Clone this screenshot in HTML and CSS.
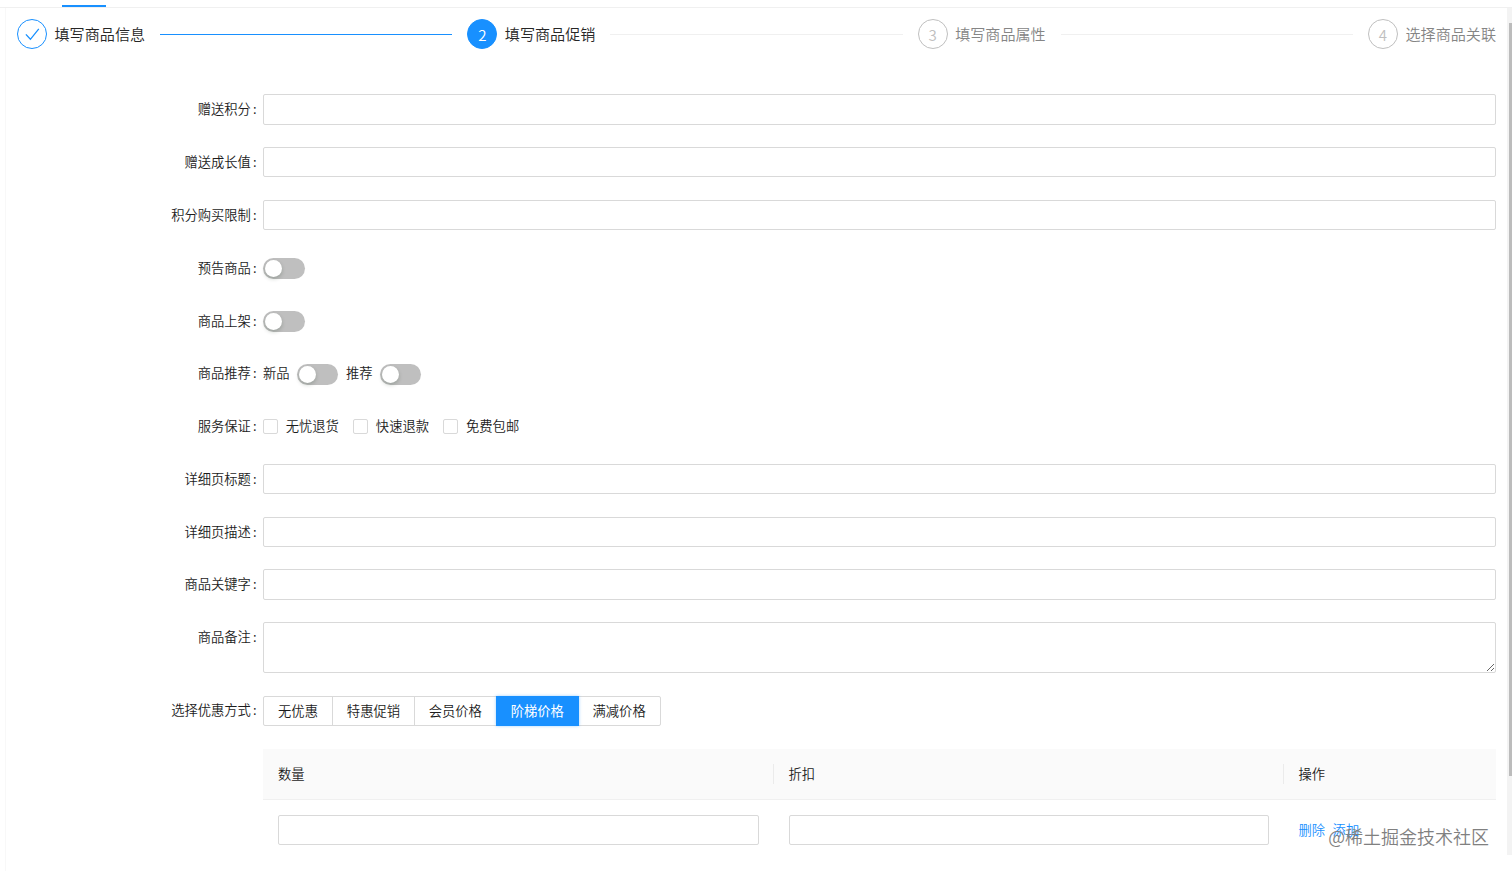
FILE: index.html
```html
<!DOCTYPE html>
<html lang="zh-CN">

<head>
	<meta charset="utf-8">
	<title>填写商品促销</title>
	<link rel="stylesheet" href="styles.css">
</head>

<body>
	<div class="tabs">
		<div class="ink-bar"></div>
	</div>
	<div class="wrap">
		<div class="panel">
			<div class="steps">
				<div class="step finish">
					<span class="step-icon">
						<svg width="15" height="15" viewBox="0 0 15 15"><path d="M0.9 7.4 L5.4 12.3 L13.8 1.9" fill="none" stroke="#1890ff" stroke-width="1.3" /></svg>
					</span>
					<span class="step-title">填写商品信息</span>
					<span class="step-line"></span>
				</div>
				<div class="step active">
					<span class="step-icon">2</span>
					<span class="step-title">填写商品促销</span>
					<span class="step-line"></span>
				</div>
				<div class="step">
					<span class="step-icon">3</span>
					<span class="step-title">填写商品属性</span>
					<span class="step-line"></span>
				</div>
				<div class="step">
					<span class="step-icon">4</span>
					<span class="step-title">选择商品关联</span>
				</div>
			</div>

			<form class="form">
				<div class="row">
					<label class="label">赠送积分</label>
					<input type="text" class="input" />
				</div>
				<div class="row">
					<label class="label">赠送成长值</label>
					<input type="text" class="input" />
				</div>
				<div class="row">
					<label class="label">积分购买限制</label>
					<input type="text" class="input" />
				</div>
				<div class="row">
					<label class="label">预告商品</label>
					<div class="control"><button type="button" class="switch"></button></div>
				</div>
				<div class="row">
					<label class="label">商品上架</label>
					<div class="control"><button type="button" class="switch"></button></div>
				</div>
				<div class="row">
					<label class="label">商品推荐</label>
					<div class="control">
						<span>新品</span>
						<button type="button" class="switch"></button>
						<span>推荐</span>
						<button type="button" class="switch"></button>
					</div>
				</div>
				<div class="row">
					<label class="label">服务保证</label>
					<div class="control checks">
						<label class="check"><input type="checkbox" />无忧退货</label>
						<label class="check"><input type="checkbox" />快速退款</label>
						<label class="check"><input type="checkbox" />免费包邮</label>
					</div>
				</div>
				<div class="row">
					<label class="label">详细页标题</label>
					<input type="text" class="input" />
				</div>
				<div class="row">
					<label class="label">详细页描述</label>
					<input type="text" class="input" />
				</div>
				<div class="row">
					<label class="label">商品关键字</label>
					<input type="text" class="input" />
				</div>
				<div class="row">
					<label class="label">商品备注</label>
					<textarea class="input area"></textarea>
				</div>
				<div class="row">
					<label class="label">选择优惠方式</label>
					<div class="radios">
						<span class="radio short">无优惠</span>
						<span class="radio">特惠促销</span>
						<span class="radio">会员价格</span>
						<span class="radio checked">阶梯价格</span>
						<span class="radio">满减价格</span>
					</div>
				</div>
				<div class="table">
					<div class="tr head">
						<div class="th">数量</div>
						<div class="th">折扣</div>
						<div class="th">操作</div>
					</div>
					<div class="tr">
						<div class="td"><input type="text" class="input" /></div>
						<div class="td"><input type="text" class="input" /></div>
						<div class="td links"><a>删除</a><a>添加</a></div>
					</div>
				</div>
			</form>
		</div>
		<div class="scrollbar">
			<div class="thumb"></div>
		</div>
	</div>
	<div class="watermark">@稀土掘金技术社区</div>
</body>

</html>
```

FILE: styles.css
```css
* {
	box-sizing: border-box;
}

body {
	margin: 0;
	height: 871px;
	overflow: hidden;
	background: #fff;
	color: #1c1c1c;
	font-family: "Noto Sans CJK SC", sans-serif;
	font-size: 13.3px;
	font-weight: 350;
	line-height: 20px;
}

.tabs {
	display: flex;
	align-items: flex-end;
	height: 8px;
	padding-left: 62px;
	border-bottom: 1px solid #f0f0f0;
}

.ink-bar {
	width: 43.5px;
	height: 2px;
	background: #1890ff;
}

.wrap {
	display: flex;
	height: 863px;
	padding-left: 5px;
}

.panel {
	flex: 1;
	padding: 11px 11px 0 11px;
	border-left: 1px solid #f8f8f8;
}

.steps {
	display: flex;
	gap: 15px;
	height: 30px;
	margin-bottom: 45.4px;
}

.step {
	display: flex;
	flex: 1;
	align-items: center;
	color: #858585;
	font-size: 15.1px;
}

.step:last-child {
	flex: none;
}

.step-icon {
	display: flex;
	align-items: center;
	justify-content: center;
	width: 30px;
	height: 30px;
	margin-right: 7.5px;
	border: 1px solid #bfbfbf;
	border-radius: 50%;
	color: #bfbfbf;
}

.step-title {
	padding-bottom: 2px;
	white-space: nowrap;
}

.step-line {
	flex: 1;
	height: 1px;
	margin-left: 15px;
	background: #f0f0f0;
}

.finish,
.active {
	color: #262626;
}

.finish .step-icon {
	border-color: #1890ff;
}

.finish .step-line {
	background: #1890ff;
}

.active .step-icon {
	background: #1890ff;
	border-color: #1890ff;
	color: #fff;
}

.form {
	display: flex;
	flex-direction: column;
	gap: 22.6px;
}

.row {
	display: flex;
}

.label {
	width: 246px;
	padding-right: 6.5px;
	line-height: 29px;
	text-align: right;
}

.label::after {
	content: ":";
	margin-left: 2px;
}

.input {
	flex: 1;
	min-width: 0;
	height: 30.2px;
	border: 1px solid #d9d9d9;
	border-radius: 2px;
	background: #fff;
	outline: 0;
}

.area {
	display: block;
	height: 50.4px;
	resize: vertical;
}

.control {
	display: flex;
	align-items: center;
	gap: 7.4px;
	height: 30.2px;
	line-height: 29px;
}

.control span {
	margin-top: -2px;
}

.switch {
	width: 41.5px;
	height: 20.8px;
	margin-top: 2px;
	padding: 0 2px;
	border: 0;
	border-radius: 11px;
	background: #bfbfbf;
}

.switch::before {
	content: "";
	display: block;
	width: 17px;
	height: 17px;
	border-radius: 50%;
	background: #fff;
	box-shadow: 0 2px 4px rgba(0, 35, 11, 0.2);
}

.checks {
	gap: 14.3px;
}

.check {
	display: flex;
	align-items: center;
	margin-top: -1px;
}

.check input {
	appearance: none;
	width: 15px;
	height: 15px;
	margin: 1px 7.7px 0 0;
	border: 1px solid #d9d9d9;
	border-radius: 2px;
	background: #fff;
}

.radios {
	display: flex;
	padding-top: 0.6px;
}

.radio {
	width: 82.9px;
	height: 30.2px;
	margin-right: -1px;
	border: 1px solid #d9d9d9;
	line-height: 28px;
	text-align: center;
}

.radio.short {
	width: 70px;
	border-radius: 2px 0 0 2px;
}

.radio:last-child {
	border-radius: 0 2px 2px 0;
}

.radio.checked {
	z-index: 1;
	border-color: #1890ff;
	background: #1890ff;
	box-shadow: 0 0 3px rgba(24, 144, 255, 0.4);
	color: #fff;
	font-weight: 400;
}

.table {
	margin-left: 246px;
}

.tr {
	display: grid;
	grid-template-columns: 510.5px 510px 1fr;
}

.head {
	padding: 15px 0;
	border-bottom: 1px solid #f0f0f0;
	background: #fafafa;
}

.th {
	height: 20px;
	padding-left: 15px;
	border-right: 1px solid #ebebeb;
}

.th:last-child {
	border-right: 0;
}

.td {
	display: flex;
	padding: 15.5px 15px;
}

.links {
	gap: 7.5px;
	color: #1890ff;
	line-height: 29px;
}

.scrollbar {
	width: 5px;
	height: 847px;
	padding: 15px 0 0 2px;
	background: #f3f3f3;
}

.thumb {
	height: 753px;
	background: #bcbcbc;
}

/* sits on top of the table's last cell */
.watermark {
	position: absolute;
	right: 23px;
	bottom: 22px;
	color: #808080;
	font-size: 18px;
	line-height: 26px;
}
```
